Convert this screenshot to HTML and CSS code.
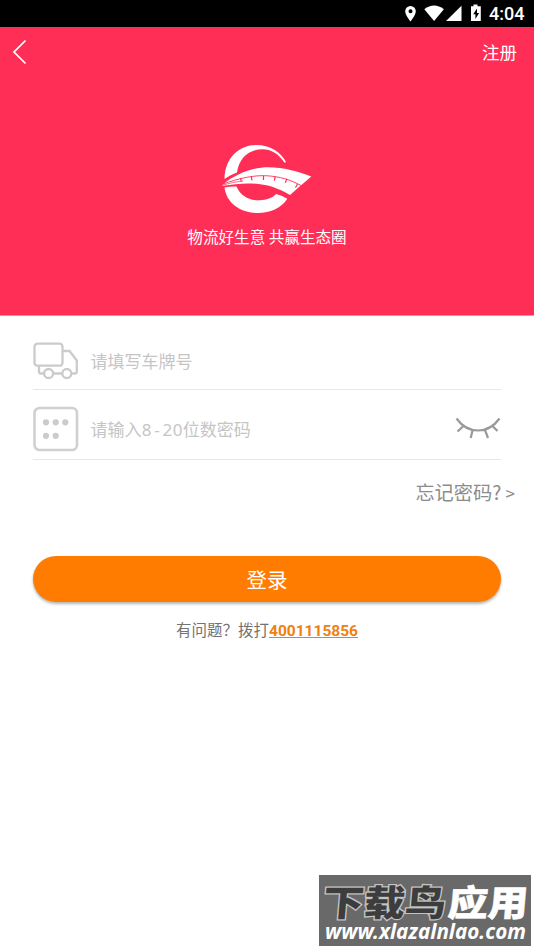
FILE: index.html
```html
<!DOCTYPE html>
<html lang="zh-CN">
<head>
<meta charset="utf-8">
<title>登录</title>
<link rel="stylesheet" href="styles.css">
</head>
<body>
<div class="status">
  <svg class="status-icons" viewBox="0 0 90 27" fill="#fff">
    <path fill-rule="evenodd" d="M10.500 6a5.300 5.300 0 0 0-5.300 5.300c0 4 5.300 10.200 5.300 10.200s5.300-6.200 5.300-10.200A5.300 5.300 0 0 0 10.500 6zm0 3.300a2 2 0 1 1 0 4 2 2 0 0 1 0-4z"/>
    <path d="M24.300 9.200Q34 1.700 43.900 9.200L34.100 20.900z"/>
    <path d="M61.500 5.800V20.900H46z"/>
    <path fill-rule="evenodd" d="M73.500 4.500h4v1.800h3.300V21H71V6.300h2.500zM77 8.500l-3.800 5.700h2.200V19l3.700-6H77z"/>
  </svg>
  <span class="clock">4:04</span>
</div>
<header class="hero">
  <nav class="bar">
    <svg class="back" viewBox="0 0 16 26"><path d="M13.500 1.500 2 13l11.500 11.500" fill="none" stroke="#fff" stroke-width="1.700"/></svg>
    <span class="register">注册</span>
  </nav>
  <svg class="logo" viewBox="0 0 92 72" fill="#fff">
    <path d="M3.500 36C4 14 19 2 35 2c14 0 25 7 30 17l-1.400.8C58 11 50 6.300 41.500 6.300 28 6.300 18 15 16 29.500 11 31.500 7 33.500 3.500 36z"/>
    <path d="M1.200 41.800C16 30 32 24.400 47 24.300c16 0 29 4 43.300 9.200L79.500 42.700 69 52C48 39.500 28 38.200 1.200 43z"/>
    <path d="M1 41.300C19 35 33 32 46 32.800S69 36.500 81 43" fill="none" stroke="#ff2e56" stroke-width=".9"/>
    <path d="M1 42.300Q12 39 22 38" fill="none" stroke="#ff2e56" stroke-width=".7"/>
    <path d="m19.500 35.200.8 3.500m10-5.300.7 4m11.500-4.700v4.300m11.800-3.500-1 4.200m12.500-2-1.500 4.200M76.500 41l-2 3.500" stroke="#ff2e56" stroke-width="1.200"/>
    <path d="M3.500 44.500q6-1.300 12-1C19 51.500 26 57 37 57.300c8 .3 14-2 18-6.200q6.500 1.600 11.300 4.700C60 65.500 49 70 37 70 19 70 5.500 60 3.500 44.500z"/>
  </svg>
  <p class="slogan">物流好生意 共赢生态圈</p>
</header>
<main class="form">
  <div class="field plate">
    <svg class="icon" viewBox="0 0 46 46" fill="none" stroke="#cbcbcb" stroke-width="2.300">
      <rect x="1.500" y="5.700" width="28" height="22" rx="3"/>
      <path d="M29.500 13h7l7.300 9.500V33.500q0 2-2 2H39M29 35.500h-8.500M11 35.500H8q-2 0-2-2v-5.500"/>
      <circle cx="15.600" cy="35.500" r="4.500"/><circle cx="33.800" cy="35.500" r="4.500"/>
    </svg>
    <span>请填写车牌号</span>
  </div>
  <div class="field password">
    <svg class="icon" viewBox="0 0 46 46">
      <rect x="1.500" y="2" width="42.500" height="42" rx="5" fill="none" stroke="#d0d0d0" stroke-width="2.600"/>
      <g fill="#cbcbcb"><circle cx="13" cy="16.300" r="3.100"/><circle cx="22.700" cy="16.300" r="3.100"/><circle cx="32.300" cy="16.300" r="3.100"/><circle cx="13" cy="29.800" r="3.100"/><circle cx="22.700" cy="29.800" r="3.100"/></g>
    </svg>
    <span class="hint">请输入<b>8</b><b>-</b><b>2</b><b>0</b>位数密码</span>
    <svg class="eye" viewBox="0 0 46 24" fill="none" stroke="#999" stroke-width="2.200"><path d="M1.500 1.500C13 17.500 33 17.500 44.500 1.500M8.500 9l-6 5.500M17.500 13.500l-1.800 7.500M30 13l3 8M37.500 9l5 5"/></svg>
  </div>
  <div class="forgot">忘记密码? <span>&gt;</span></div>
  <div class="login">登录</div>
  <p class="help">有问题？拨打<span class="phone">4001115856</span></p>
</main>
<svg class="watermark" viewBox="0 0 212 71">
  <rect width="212" height="71" fill="#696969"/>
  <g class="mark-name" transform="translate(3 41) skewX(-5)">
    <text class="mark-dark" x="0" y="0" textLength="123" lengthAdjust="spacingAndGlyphs">下载鸟</text>
    <text class="mark-light" x="125" y="0" textLength="80" lengthAdjust="spacingAndGlyphs">应用</text>
  </g>
  <text class="mark-url" x="6" y="64" textLength="201" lengthAdjust="spacingAndGlyphs">www.xlazalnlao.com</text>
</svg>
</body>
</html>
```
FILE: styles.css
```css
* { box-sizing: border-box; }
body {
  margin: 0;
  height: 950px;
  overflow: hidden;
  background: #fff;
  font-family: "Noto Sans CJK SC", sans-serif;
}
p { margin: 0; }
svg { display: block; flex: none; }
.status {
  height: 27px;
  background: #000;
  display: flex;
  justify-content: flex-end;
  padding-right: 9px;
}
.status-icons { width: 90px; height: 27px; margin-right: -1px; }
.clock {
  width: 36px;
  color: #fff;
  font: 500 18px/27px Roboto, sans-serif;
  white-space: nowrap;
}
.hero {
  height: 289px;
  background: #ff2e56;
  color: #fff;
  display: flex;
  flex-direction: column;
  align-items: center;
  border-bottom: 1px solid #ff8ca2;
}
.bar {
  width: 100%;
  height: 50px;
  padding: 0 17px 0 12px;
  display: flex;
  align-items: center;
  justify-content: space-between;
}
.back { width: 16px; height: 26px; }
.register { font-size: 17.500px; line-height: 26px; }
.logo { width: 92px; height: 72px; margin-top: 66px; }
.slogan { margin-top: 9px; font-size: 15.600px; line-height: 24px; white-space: nowrap; }
.form { padding: 0 33px; }
.field {
  display: flex;
  align-items: center;
  color: #c5c5c5;
  font-size: 17px;
  line-height: 26px;
  border-bottom: 1px solid #e8e8e8;
}
.icon { width: 46px; height: 46px; margin-right: 11.500px; }
.plate { height: 74px; padding-top: 17px; }
.password { height: 70px; padding-top: 8px; }
.hint { padding-top: 2px; }
.hint b {
  display: inline-block;
  width: 10.300px;
  text-align: center;
  font-weight: 400;
  font-family: "Noto Sans", sans-serif;
}
.eye { width: 46px; height: 24px; margin-left: auto; }
.forgot {
  margin: 18px -14px 0 0;
  text-align: right;
  color: #8c8c8c;
  font-size: 19.200px;
  line-height: 28px;
}
.forgot span { font-size: 17px; }
.login {
  height: 46px;
  margin-top: 49px;
  border-radius: 23px;
  background: #ff7c00;
  box-shadow: 0 2px 3px rgba(0, 0, 0, .3);
  color: #fff;
  font-size: 20.500px;
  line-height: 46px;
  text-align: center;
}
.help {
  margin-top: 15px;
  color: #737373;
  font-size: 15.500px;
  line-height: 24px;
  text-align: center;
  white-space: nowrap;
}
.phone {
  color: #f08010;
  font-family: Roboto, sans-serif;
  font-weight: 700;
  text-decoration: underline;
}
.watermark {
  position: absolute;
  left: 319px;
  top: 875px;
  width: 212px;
  height: 71px;
}
.mark-name { font-size: 36px; font-weight: 900; paint-order: stroke; }
.mark-dark { fill: #3d3d3d; stroke: #c4c4c4; stroke-width: 2.500px; }
.mark-light { fill: #fff; stroke: #fff; stroke-width: .5px; }
.mark-url { fill: #fff; font: italic 700 21px "Noto Sans", sans-serif; }
```
